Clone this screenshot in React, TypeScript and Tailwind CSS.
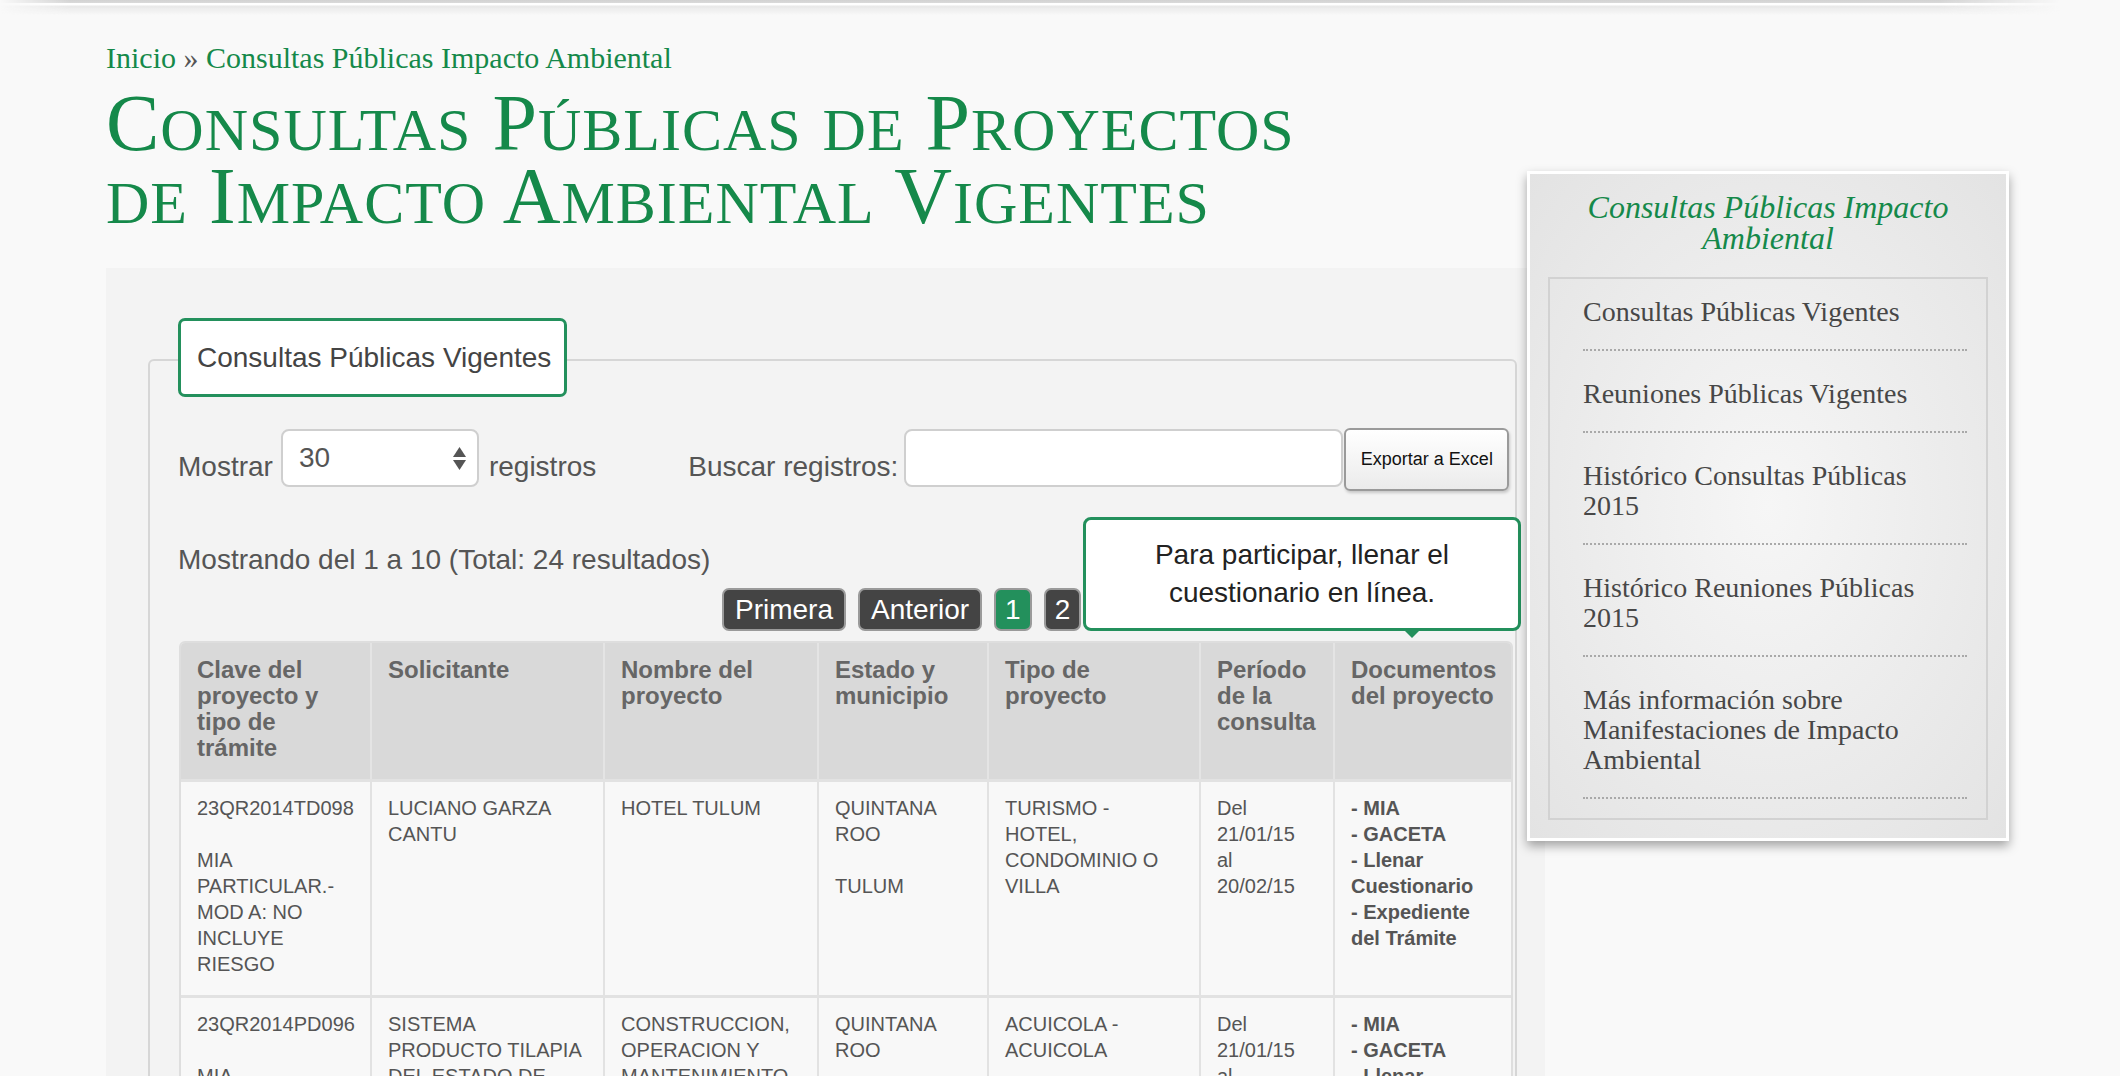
import React from "react";

const SERIF = "font-['Liberation_Serif','Times_New_Roman',serif]";

function SmallCap({ children }: { children: React.ReactNode }) {
  return <span className="text-[60px] uppercase leading-[0]">{children}</span>;
}

function Big({ children }: { children: React.ReactNode }) {
  return <span className="leading-[0]">{children}</span>;
}

const headCols = [
  "Clave del proyecto y tipo de trámite",
  "Solicitante",
  "Nombre del proyecto",
  "Estado y municipio",
  "Tipo de proyecto",
  "Período de la consulta",
  "Documentos del proyecto",
];

type Row = {
  clave: string;
  tramite: string;
  solicitante: string;
  nombre: string;
  estado: string;
  municipio: string;
  tipo: string;
  desde: string;
  hasta: string;
};

const rows: Row[] = [
  {
    clave: "23QR2014TD098",
    tramite: "MIA PARTICULAR.- MOD A: NO INCLUYE RIESGO",
    solicitante: "LUCIANO GARZA CANTU",
    nombre: "HOTEL TULUM",
    estado: "QUINTANA ROO",
    municipio: "TULUM",
    tipo: "TURISMO - HOTEL, CONDOMINIO O VILLA",
    desde: "21/01/15",
    hasta: "20/02/15",
  },
  {
    clave: "23QR2014PD096",
    tramite: "MIA PARTICULAR.- MOD A: NO INCLUYE RIESGO",
    solicitante: "SISTEMA PRODUCTO TILAPIA DEL ESTADO DE QUINTANA ROO, A.C.",
    nombre: "CONSTRUCCION, OPERACION Y MANTENIMIENTO DE UNA GRANJA ACUICOLA",
    estado: "QUINTANA ROO",
    municipio: "BACALAR",
    tipo: "ACUICOLA - ACUICOLA",
    desde: "21/01/15",
    hasta: "20/02/15",
  },
];

const menu = [
  "Consultas Públicas Vigentes",
  "Reuniones Públicas Vigentes",
  "Histórico Consultas Públicas 2015",
  "Histórico Reuniones Públicas 2015",
  "Más información sobre Manifestaciones de Impacto Ambiental",
];

const pageBtn =
  "h-[43px] rounded-[7px] border-2 border-[#9a9a9a] bg-[#444444] px-[11px] text-[28px] leading-[39px] text-white";

export default function App() {
  return (
    <div className="h-[1076px] overflow-hidden bg-[#f9f9f9] font-['Liberation_Sans',Arial,sans-serif]">
      {/* top shadow strip */}
      <div className="h-[15px] bg-[linear-gradient(to_bottom,#d2d2d2_0px,#dadada_3px,#ffffff_3px,#ffffff_5px,#e8e8e8_6px,rgba(249,249,249,0)_15px)] [mask-image:linear-gradient(to_right,transparent_0px,black_70px,black_1940px,transparent_2060px)]" />

      <div className="flex items-start pl-[106px]">
        {/* main column */}
        <div className="w-[1439px] shrink-0">
          <div className={`${SERIF} pt-[25px] text-[30px] leading-[36px] text-[#15894a]`}>
            Inicio <span className="text-[#555555]">»</span> Consultas Públicas Impacto Ambiental
          </div>

          <h1 className={`${SERIF} mt-[11px] text-[80px] font-normal leading-[73px] tracking-[1px] text-[#15894a]`}>
            <Big>C</Big>
            <SmallCap>onsultas</SmallCap> <Big>P</Big>
            <SmallCap>úblicas</SmallCap> <SmallCap>de</SmallCap> <Big>P</Big>
            <SmallCap>royectos</SmallCap>
            <br />
            <SmallCap>de</SmallCap> <Big>I</Big>
            <SmallCap>mpacto</SmallCap> <Big>A</Big>
            <SmallCap>mbiental</SmallCap> <Big>V</Big>
            <SmallCap>igentes</SmallCap>
          </h1>

          {/* gray panel */}
          <div className="mt-[35px] h-[900px] bg-[#f3f3f3] pl-[42px] pr-[28px] pt-[50px]">
            {/* legend */}
            <div className="relative z-10 ml-[30px] flex h-[79px] w-fit items-center rounded-[7px] border-[3px] border-[#23905c] bg-white pl-[16px] pr-[13px] text-[28px] text-[#444444]">
              Consultas Públicas Vigentes
            </div>

            {/* fieldset body */}
            <div className="relative -mt-[38px] h-[900px] rounded-[6px] border-2 border-[#d6d6d6] pl-[28px] pr-[2px] pt-[67px]">
              {/* controls */}
              <div className="flex items-start text-[28px] text-[#555555]">
                <span className="mr-[8px] mt-[23px] leading-[32px]">Mostrar</span>
                <div className="mt-[1px] flex h-[58px] w-[198px] items-center justify-between rounded-[8px] border-2 border-[#cfcfcf] bg-white pl-[16px] pr-[11px]">
                  <span className="text-[28px] leading-[32px] text-[#555555]">30</span>
                  <svg width="13" height="24" viewBox="0 0 13 24" className="mt-[1px]">
                    <polygon points="6.5,0 13,10 0,10" fill="#555555" />
                    <polygon points="0,13 13,13 6.5,23" fill="#555555" />
                  </svg>
                </div>
                <span className="ml-[10px] mt-[23px] leading-[32px]">registros</span>
                <span className="ml-[92px] mt-[23px] leading-[32px]">Buscar registros:</span>
                <input
                  className="ml-[6px] mt-[1px] h-[58px] w-[439px] rounded-[8px] border-2 border-[#cfcfcf] bg-white outline-none"
                  aria-label="Buscar registros"
                />
                <button className="ml-[1px] h-[63px] w-[165px] rounded-[6px] border-2 border-[#9a9a9a] bg-[linear-gradient(to_bottom,#ffffff,#ebebeb)] text-[18px] text-[#111111] shadow-[1px_2px_3px_rgba(0,0,0,0.18)]">
                  Exportar a Excel
                </button>
              </div>

              <div className="mt-[53px] text-[28px] leading-[32px] text-[#555555]">
                Mostrando del 1 a 10 (Total: 24 resultados)
              </div>

              {/* pagination */}
              <div className="ml-[544px] mt-[12px] flex gap-[12px]">
                <button className={pageBtn}>Primera</button>
                <button className={pageBtn}>Anterior</button>
                <button className="h-[43px] rounded-[7px] border-2 border-[#9a9a9a] bg-[#23905c] px-[9px] text-[28px] leading-[39px] text-white">
                  1
                </button>
                <button className="h-[43px] rounded-[7px] border-2 border-[#9a9a9a] bg-[#444444] px-[9px] text-[28px] leading-[39px] text-white">
                  2
                </button>
              </div>

              {/* table */}
              <div className="ml-[1px] mt-[10px] w-[1334px] overflow-hidden rounded-t-[6px] border-2 border-[#dedede]">
                <table className="w-full table-fixed border-separate border-spacing-0">
                  <colgroup>
                    <col className="w-[189px]" />
                    <col className="w-[233px]" />
                    <col className="w-[214px]" />
                    <col className="w-[170px]" />
                    <col className="w-[212px]" />
                    <col className="w-[134px]" />
                    <col className="w-[178px]" />
                  </colgroup>
                  <thead>
                    <tr>
                      {headCols.map((h, i) => (
                        <th
                          key={h}
                          className={`bg-[#d9d9d9] pb-[18px] pl-4 pt-[14px] text-left align-top text-[24px] font-bold leading-[26px] text-[#666666] ${
                            i > 0 ? "border-l-2 border-[#e4e4e4]" : ""
                          } ${i === 6 ? "pr-[10px]" : "pr-4"}`}
                        >
                          {h}
                        </th>
                      ))}
                    </tr>
                  </thead>
                  <tbody>
                    {rows.map((r) => {
                      const td =
                        "border-t-[3px] border-[#e2e2e2] bg-[#f8f8f8] pb-[18px] pl-4 pt-[13px] align-top text-[20px] leading-[26px] text-[#555555]";
                      const tdl = `${td} border-l-2`;
                      return (
                        <tr key={r.clave}>
                          <td className={`${td} pr-4`}>
                            {r.clave}
                            <br />
                            <br />
                            {r.tramite}
                          </td>
                          <td className={`${tdl} pr-4`}>{r.solicitante}</td>
                          <td className={`${tdl} pr-4`}>{r.nombre}</td>
                          <td className={`${tdl} pr-4`}>
                            {r.estado}
                            <br />
                            <br />
                            {r.municipio}
                          </td>
                          <td className={`${tdl} pr-4`}>{r.tipo}</td>
                          <td className={`${tdl} pr-4`}>
                            Del
                            <br />
                            {r.desde}
                            <br />
                            al
                            <br />
                            {r.hasta}
                          </td>
                          <td className={`${tdl} pr-[10px] font-bold text-[#333333]`}>
                            <div>- MIA</div>
                            <div>- GACETA</div>
                            <div>- Llenar Cuestionario</div>
                            <div>- Expediente del Trámite</div>
                          </td>
                        </tr>
                      );
                    })}
                  </tbody>
                </table>
              </div>

              {/* tooltip */}
              <div className="absolute left-[933px] top-[156px] z-20 flex h-[114px] w-[438px] items-center justify-center rounded-[8px] border-[3px] border-[#23905c] bg-white text-center text-[28px] leading-[38px] text-[#222222]">
                <span>
                  Para participar, llenar el
                  <br />
                  cuestionario en línea.
                </span>
                <div className="absolute left-[316px] top-full h-0 w-0 border-l-[10px] border-r-[10px] border-t-[10px] border-l-transparent border-r-transparent border-t-[#23905c]" />
              </div>
            </div>
          </div>
        </div>

        {/* sidebar */}
        <aside
          className={`${SERIF} relative z-30 -ml-[18px] mt-[156px] w-[482px] shrink-0 border-[3px] border-white bg-[radial-gradient(ellipse_at_center,#f6f6f6_0%,#e3e3e3_100%)] px-[15px] pb-[18px] pt-[18px] shadow-[0_5px_10px_rgba(0,0,0,0.35)]`}
        >
          <div className="text-center text-[32px] italic leading-[31px] text-[#15894a]">
            Consultas Públicas Impacto Ambiental
          </div>
          <ul className="mx-[3px] mt-[23px] border-2 border-[#d2d2d2] pb-[19px] pl-[33px] pr-[19px]">
            {menu.map((m, i) => (
              <li
                key={m}
                className={`border-b-2 border-dotted border-[#a9a9a9] pb-[22px] text-[28px] leading-[30px] text-[#474747] ${
                  i === 0 ? "pt-[18px]" : "pt-[28px]"
                }`}
              >
                <div className="pr-[10px]">{m}</div>
              </li>
            ))}
          </ul>
        </aside>
      </div>
    </div>
  );
}
